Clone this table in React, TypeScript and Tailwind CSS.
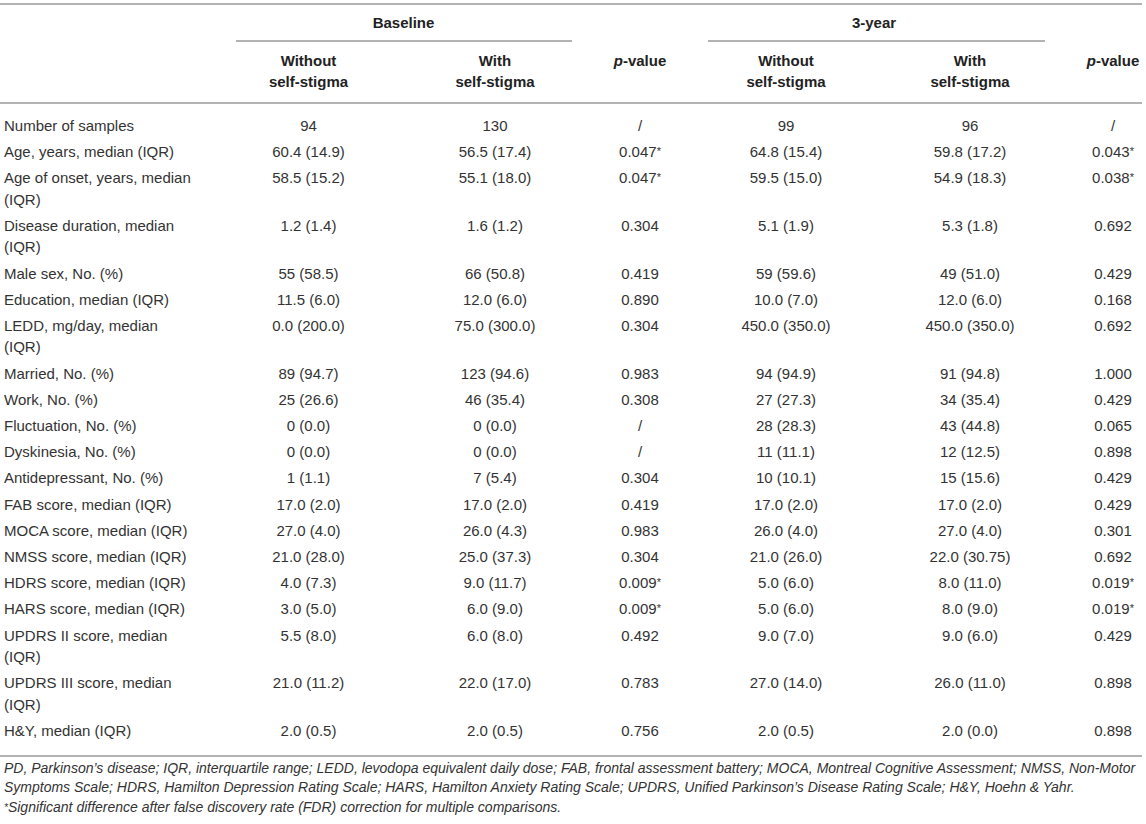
const cols = "grid grid-cols-[217px_183px_190px_100px_192px_176px_84px]";

type Row = [string, string, string, string, string, string, string];

const rows: Row[] = [
  ["Number of samples", "94", "130", "/", "99", "96", "/"],
  ["Age, years, median (IQR)", "60.4 (14.9)", "56.5 (17.4)", "0.047*", "64.8 (15.4)", "59.8 (17.2)", "0.043*"],
  ["Age of onset, years, median (IQR)", "58.5 (15.2)", "55.1 (18.0)", "0.047*", "59.5 (15.0)", "54.9 (18.3)", "0.038*"],
  ["Disease duration, median (IQR)", "1.2 (1.4)", "1.6 (1.2)", "0.304", "5.1 (1.9)", "5.3 (1.8)", "0.692"],
  ["Male sex, No. (%)", "55 (58.5)", "66 (50.8)", "0.419", "59 (59.6)", "49 (51.0)", "0.429"],
  ["Education, median (IQR)", "11.5 (6.0)", "12.0 (6.0)", "0.890", "10.0 (7.0)", "12.0 (6.0)", "0.168"],
  ["LEDD, mg/day, median (IQR)", "0.0 (200.0)", "75.0 (300.0)", "0.304", "450.0 (350.0)", "450.0 (350.0)", "0.692"],
  ["Married, No. (%)", "89 (94.7)", "123 (94.6)", "0.983", "94 (94.9)", "91 (94.8)", "1.000"],
  ["Work, No. (%)", "25 (26.6)", "46 (35.4)", "0.308", "27 (27.3)", "34 (35.4)", "0.429"],
  ["Fluctuation, No. (%)", "0 (0.0)", "0 (0.0)", "/", "28 (28.3)", "43 (44.8)", "0.065"],
  ["Dyskinesia, No. (%)", "0 (0.0)", "0 (0.0)", "/", "11 (11.1)", "12 (12.5)", "0.898"],
  ["Antidepressant, No. (%)", "1 (1.1)", "7 (5.4)", "0.304", "10 (10.1)", "15 (15.6)", "0.429"],
  ["FAB score, median (IQR)", "17.0 (2.0)", "17.0 (2.0)", "0.419", "17.0 (2.0)", "17.0 (2.0)", "0.429"],
  ["MOCA score, median (IQR)", "27.0 (4.0)", "26.0 (4.3)", "0.983", "26.0 (4.0)", "27.0 (4.0)", "0.301"],
  ["NMSS score, median (IQR)", "21.0 (28.0)", "25.0 (37.3)", "0.304", "21.0 (26.0)", "22.0 (30.75)", "0.692"],
  ["HDRS score, median (IQR)", "4.0 (7.3)", "9.0 (11.7)", "0.009*", "5.0 (6.0)", "8.0 (11.0)", "0.019*"],
  ["HARS score, median (IQR)", "3.0 (5.0)", "6.0 (9.0)", "0.009*", "5.0 (6.0)", "8.0 (9.0)", "0.019*"],
  ["UPDRS II score, median (IQR)", "5.5 (8.0)", "6.0 (8.0)", "0.492", "9.0 (7.0)", "9.0 (6.0)", "0.429"],
  ["UPDRS III score, median (IQR)", "21.0 (11.2)", "22.0 (17.0)", "0.783", "27.0 (14.0)", "26.0 (11.0)", "0.898"],
  ["H&Y, median (IQR)", "2.0 (0.5)", "2.0 (0.5)", "0.756", "2.0 (0.5)", "2.0 (0.0)", "0.898"],
];

function Val({ v }: { v: string }) {
  if (v.endsWith("*")) {
    return (
      <>
        {v.slice(0, -1)}
        <span className="text-[11px] align-top">*</span>
      </>
    );
  }
  return <>{v}</>;
}

function PValue() {
  return (
    <span>
      <i>p</i>-value
    </span>
  );
}

export default function App() {
  return (
    <div className="bg-white w-[1146px] h-[824px] pt-[3px] text-[#333] font-['Liberation_Sans',Arial,sans-serif]">
      <div className="w-[1142px] border-t-[2px] border-[#b3b3b3] text-[15px] leading-[21.5px]">
        {/* Header */}
        <div className={`${cols} font-bold text-[#222]`}>
          <div />
          <div className="col-span-2 pt-[7px]">
            <div className="text-center">Baseline</div>
            <div className="mt-[6px] ml-[19px] mr-[18px] border-b-[2px] border-[#b3b3b3]" />
          </div>
          <div />
          <div className="col-span-2 pt-[7px]">
            <div className="text-center">3-year</div>
            <div className="mt-[6px] ml-[18px] mr-[13px] border-b-[2px] border-[#b3b3b3]" />
          </div>
          <div />
        </div>
        <div className={`${cols} font-bold text-[#222] pt-[8px] pb-[9px] border-b-[2px] border-[#b3b3b3]`}>
          <div />
          <div className="text-center">Without<br />self-stigma</div>
          <div className="text-center">With<br />self-stigma</div>
          <div className="text-center"><PValue /></div>
          <div className="text-center">Without<br />self-stigma</div>
          <div className="text-center">With<br />self-stigma</div>
          <div className="text-center pl-[26px]"><PValue /></div>
        </div>

        {/* Body */}
        <div className="pt-[9px] pb-[11px] border-b-[2px] border-[#b3b3b3]">
          {rows.map((r) => (
            <div key={r[0]} className={`${cols} py-[2.35px]`}>
              <div className="pl-[4px] pr-[20px]">{r[0]}</div>
              <div className="text-center"><Val v={r[1]} /></div>
              <div className="text-center"><Val v={r[2]} /></div>
              <div className="text-center"><Val v={r[3]} /></div>
              <div className="text-center"><Val v={r[4]} /></div>
              <div className="text-center"><Val v={r[5]} /></div>
              <div className="text-center pl-[26px]"><Val v={r[6]} /></div>
            </div>
          ))}
        </div>

        {/* Footnote */}
        <div className="pl-[4px] pt-[2px] italic text-[14px] leading-[19.5px] text-[#333] whitespace-nowrap">
          <p>
            PD, Parkinson’s disease; IQR, interquartile range; LEDD, levodopa equivalent daily dose; FAB, frontal assessment battery; MOCA, Montreal Cognitive Assessment; NMSS, Non-Motor
            <br />
            Symptoms Scale; HDRS, Hamilton Depression Rating Scale; HARS, Hamilton Anxiety Rating Scale; UPDRS, Unified Parkinson’s Disease Rating Scale; H&amp;Y, Hoehn &amp; Yahr.
          </p>
          <p>
            <span className="text-[10px] align-top">*</span>Significant difference after false discovery rate (FDR) correction for multiple comparisons.
          </p>
        </div>
      </div>
    </div>
  );
}
